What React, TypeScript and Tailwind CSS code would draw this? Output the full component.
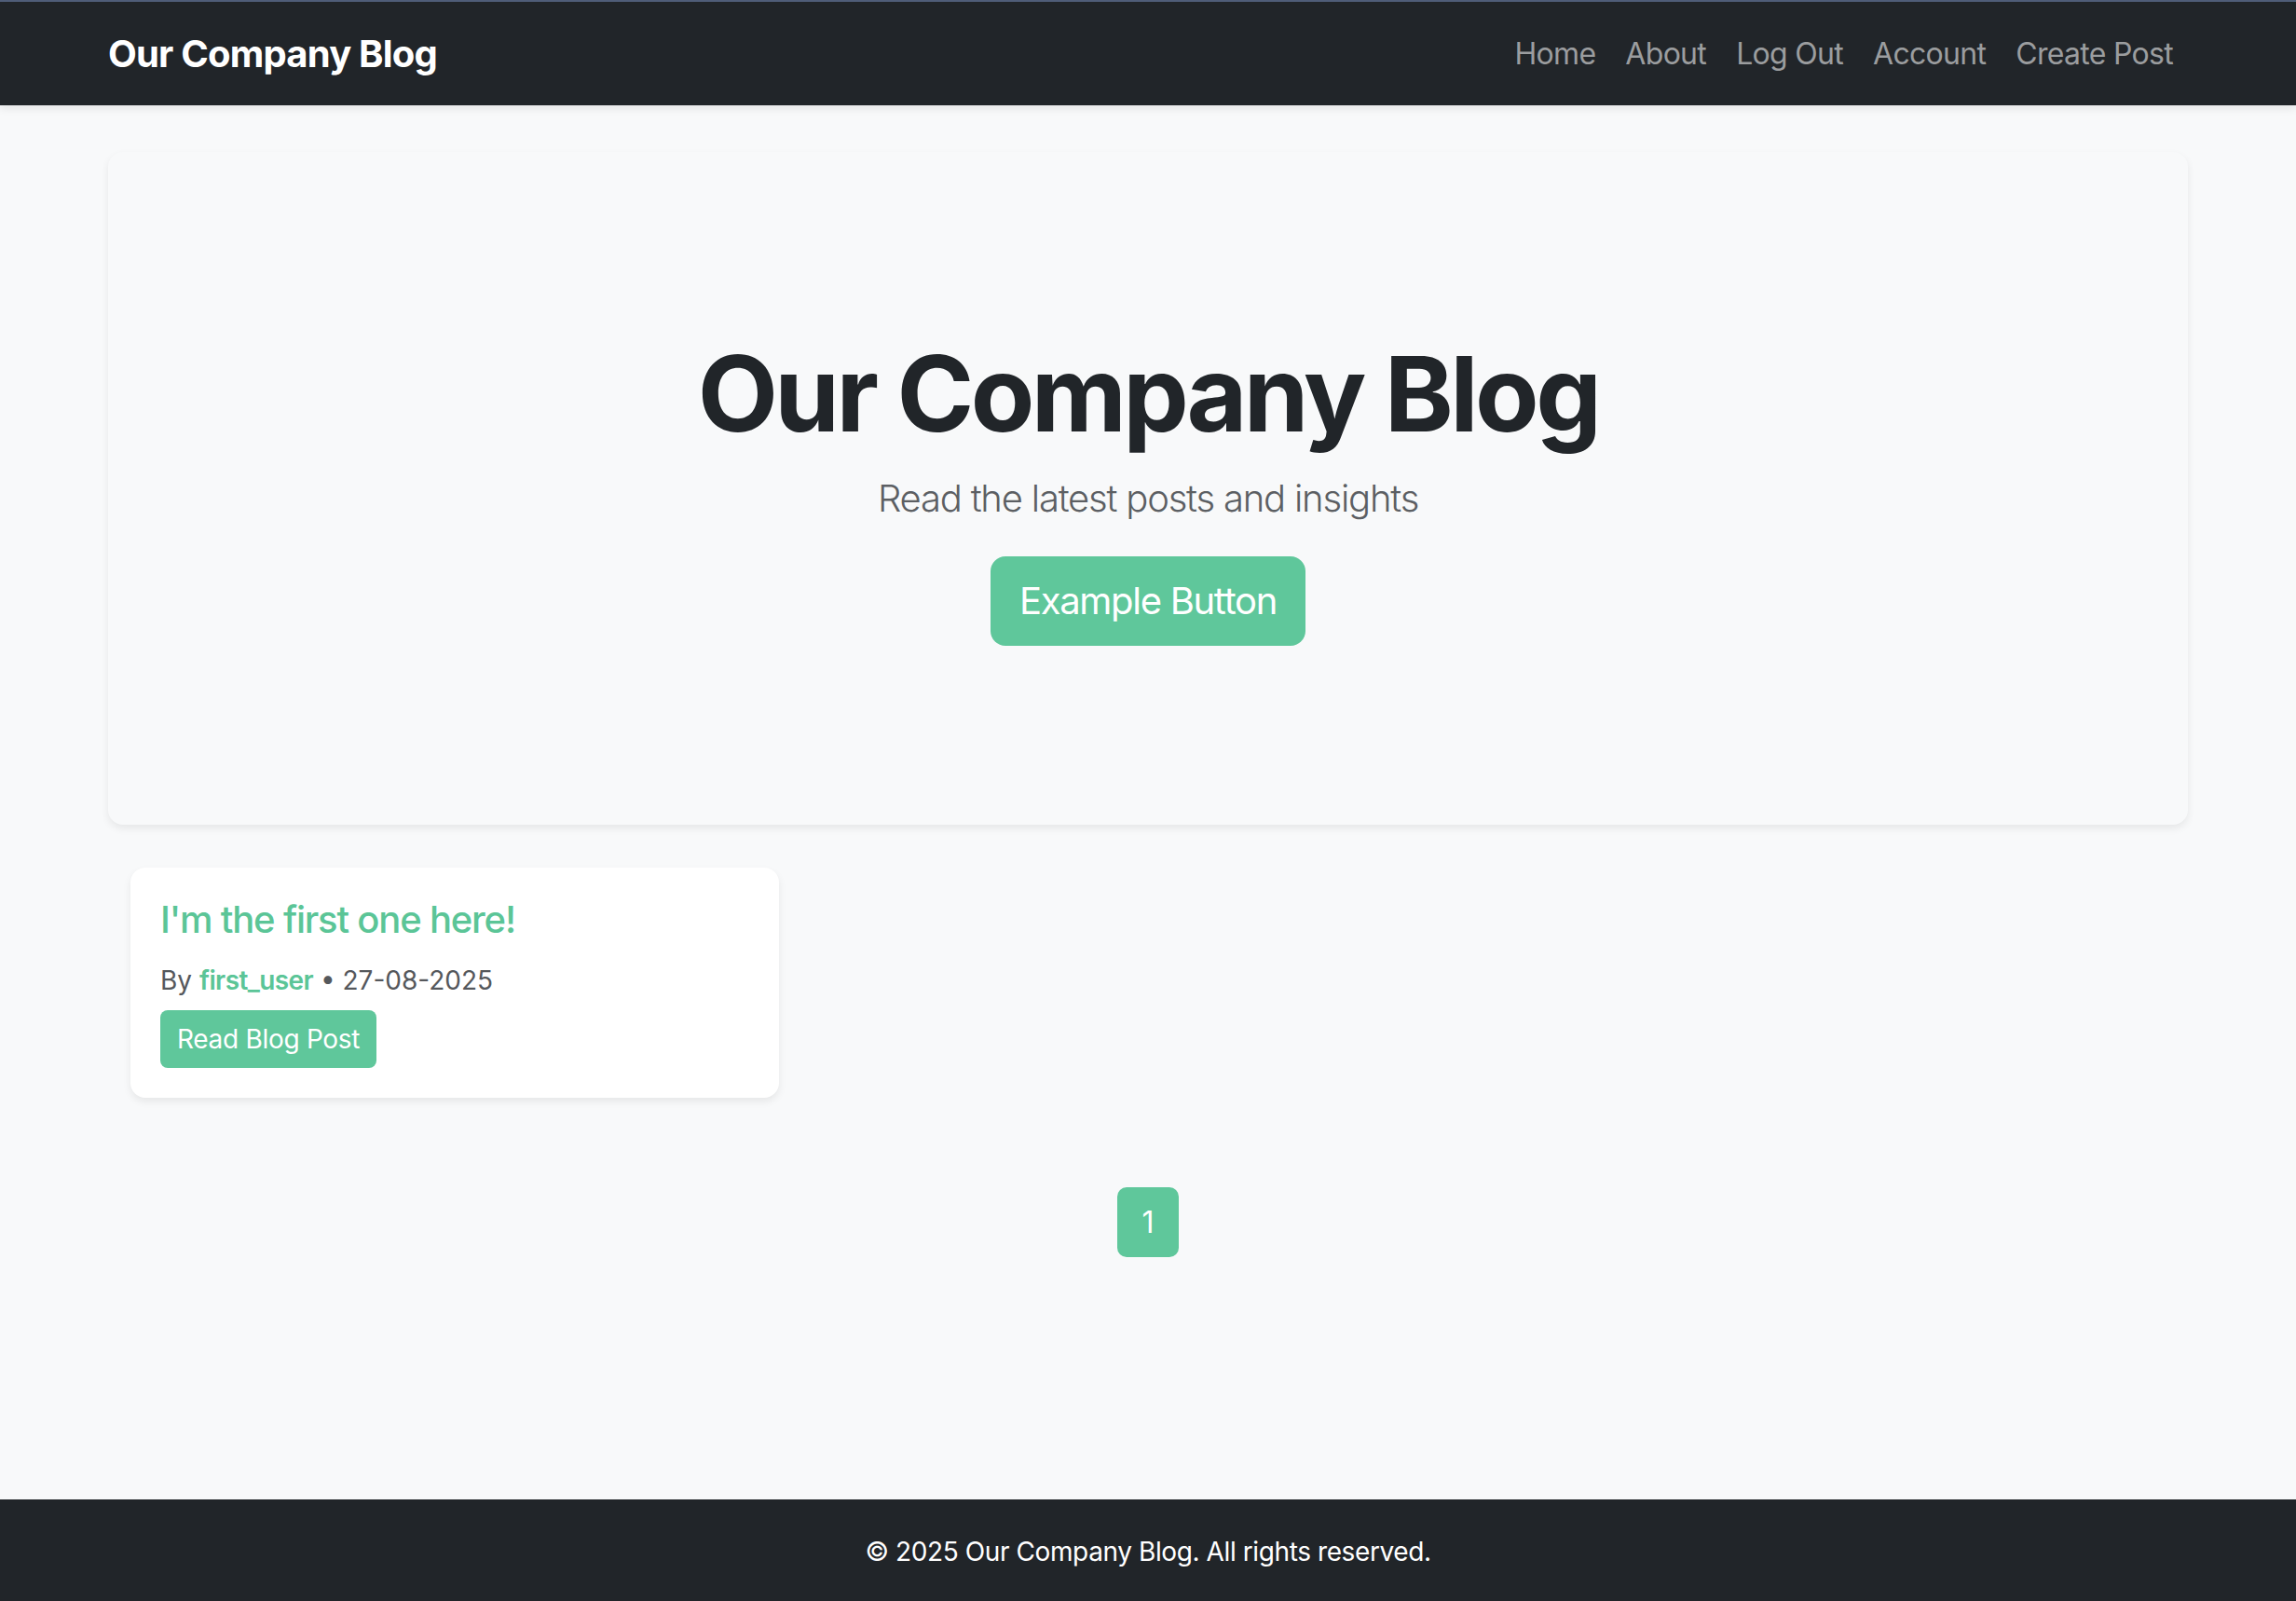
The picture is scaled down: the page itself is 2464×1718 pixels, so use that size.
import React from 'react';

const posts = [
  { id: 1, title: "I'm the first one here!", author: 'first_user', date: '27-08-2025' },
];

const navLinks = ['Home', 'About', 'Log Out', 'Account', 'Create Post'];

const App = () => {
  return (
    <div className="min-h-screen flex flex-col bg-[#f8f9fa] font-['Inter','Noto_Sans',sans-serif] text-[#212529]">
      <nav className="border-t-2 border-[#4f5d78] bg-[#212529] shadow-[0_4px_8px_rgba(0,0,0,0.08)]">
        <div className="mx-auto w-[2280px] px-6 h-[111px] flex items-center justify-between">
          <a className="text-[40px] font-bold text-white tracking-[-0.8px]">Our Company Blog</a>
          <ul className="flex items-center">
            {navLinks.map((link) => (
              <li key={link}>
                <a className="block px-4 text-[32px] tracking-[-0.7px] text-[#9b9d9f]">{link}</a>
              </li>
            ))}
          </ul>
        </div>
      </nav>

      <main className="flex-1">
        <div className="mx-auto w-[2280px] px-6 pt-[50px]">
          <section className="rounded-2xl bg-[#f8f9fa] py-48 text-center shadow-[0_4px_8px_rgba(0,0,0,0.075)]">
            <h1 className="text-[112px] font-bold leading-[1.2] tracking-[-3.6px] mb-4">Our Company Blog</h1>
            <p className="text-[40px] font-light leading-[1.5] tracking-[-1.2px] text-[#5c5f63] mb-8">Read the latest posts and insights</p>
            <button className="h-[96px] px-[31px] rounded-2xl bg-[#5fc79b] text-[40px] tracking-[-1.3px] text-white">Example Button</button>
          </section>

          <div className="mt-[46px] px-6 grid grid-cols-3 gap-12">
            {posts.map((post) => (
              <div key={post.id} className="rounded-2xl bg-white p-8 shadow-[0_4px_8px_rgba(0,0,0,0.075)]">
                <h5 className="text-[40px] font-medium leading-[1.2] tracking-[-1.2px] text-[#5bc597] mb-4">{post.title}</h5>
                <p className="text-[28px] leading-[1.5] text-[#55585c] pt-[4px] mb-[11px]">
                  By <span className="font-semibold tracking-[-0.6px] text-[#5bc597]">{post.author}</span> • {post.date}
                </p>
                <button className="h-[62px] px-[18px] rounded-lg bg-[#5fc79b] text-[28px] tracking-[-0.3px] text-white">Read Blog Post</button>
              </div>
            ))}
          </div>

          <div className="mt-[96px] flex justify-center">
            <span className="w-[66px] h-[75px] flex items-center justify-center rounded-[10px] bg-[#5fc79b] text-[32px] text-white">1</span>
          </div>
        </div>
      </main>

      <footer className="bg-[#212529] h-[109px] flex items-center justify-center">
        <p className="text-[28px] tracking-[-0.4px] text-white pt-[3px]">© 2025 Our Company Blog. All rights reserved.</p>
      </footer>
    </div>
  );
};

export default App;
